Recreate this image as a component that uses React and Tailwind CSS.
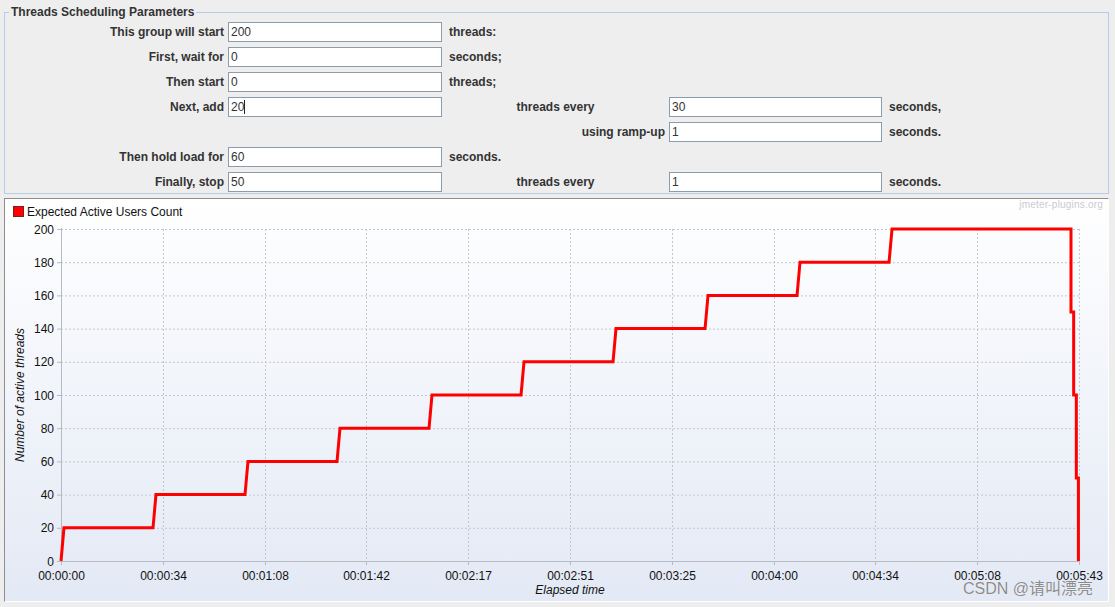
import React from "react";

const FONT = { fontFamily: '"Liberation Sans", Arial, sans-serif' };

const X0 = 61, X1 = 1079, Y0 = 562, Y1 = 230;
const tx = (t) => X0 + (t * (X1 - X0)) / 343;
const vy = (v) => Y0 - (v * (Y0 - Y1)) / 200;

const DATA = [
  [0, 0], [1, 20], [31, 20], [32, 40], [62, 40], [63, 60], [93, 60], [94, 80],
  [124, 80], [125, 100], [155, 100], [156, 120], [186, 120], [187, 140],
  [217, 140], [218, 160], [248, 160], [249, 180], [279, 180], [280, 200],
  [340.3, 200], [340.3, 150], [341.2, 150], [341.2, 100], [342.1, 100],
  [342.1, 50], [342.8, 50], [342.8, 0],
];

const XLABELS = ["00:00:00", "00:00:34", "00:01:08", "00:01:42", "00:02:17", "00:02:51", "00:03:25", "00:04:00", "00:04:34", "00:05:08", "00:05:43"];

function Field({ value, caret }) {
  return (
    <div className="h-[20px] bg-white border border-[#8d9cab] flex items-center pl-[2px] text-[12px] text-[#333333] leading-none">
      <span>{value}</span>
      {caret && <span className="inline-block w-[1px] h-[14px] bg-[#222]" />}
    </div>
  );
}

function Label({ children }) {
  return (
    <div className="h-[20px] flex items-center justify-end pr-[4px] text-[12px] font-bold text-[#333333] whitespace-nowrap">
      {children}
    </div>
  );
}

function Unit({ children, center }) {
  return (
    <div className={"h-[20px] flex items-center text-[12px] font-bold text-[#333333] whitespace-nowrap " + (center ? "justify-center" : "pl-[7px]")}>
      {children}
    </div>
  );
}

const E = () => <div className="h-[20px]" />;

function Chart() {
  const path = DATA.map(([t, v], i) => `${i ? "L" : "M"}${tx(t).toFixed(2)} ${vy(v).toFixed(2)}`).join(" ");
  const ys = [0, 20, 40, 60, 80, 100, 120, 140, 160, 180, 200];
  return (
    <svg width="1103" height="402" viewBox="5 200 1103 402" className="block" style={FONT}>
      {/* legend */}
      <rect x="13.5" y="207.5" width="10" height="10" fill="#ff0000" stroke="#7a2020" strokeWidth="1" />
      <text x="27" y="216.5" fontSize="12" fill="#111">Expected Active Users Count</text>
      <text x="1103" y="208.5" fontSize="10" fill="#c9ccd1" textAnchor="end" letterSpacing="0.2">jmeter-plugins.org</text>

      {/* grid */}
      {ys.slice(1).map((v) => (
        <line key={"h" + v} x1={X0} x2={X1} y1={vy(v) + 0.5} y2={vy(v) + 0.5} stroke="#c3c6cc" strokeDasharray="2 2" />
      ))}
      {XLABELS.slice(1).map((_, i) => {
        const x = Math.round(tx((343 * (i + 1)) / 10)) + 0.5;
        return <line key={"v" + i} x1={x} x2={x} y1={Y1} y2={Y0} stroke="#c3c6cc" strokeDasharray="2 2" />;
      })}

      {/* axes */}
      <line x1={X0 + 0.5} x2={X0 + 0.5} y1={Y1 - 1} y2={Y0 + 1} stroke="#b5bac3" />
      <line x1={X0} x2={X1 + 1} y1={Y0 + 0.5} y2={Y0 + 0.5} stroke="#b5bac3" />
      {ys.map((v) => (
        <g key={"y" + v}>
          <line x1={57} x2={X0} y1={vy(v) + 0.5} y2={vy(v) + 0.5} stroke="#b5bac3" />
          <text x="54" y={vy(v) + 4.5} fontSize="12" fill="#111" textAnchor="end">{v}</text>
        </g>
      ))}
      {XLABELS.map((l, i) => {
        const x = Math.round(tx((343 * i) / 10)) + 0.5;
        return (
          <g key={"x" + i}>
            <line x1={x} x2={x} y1={Y0} y2={Y0 + 4} stroke="#b5bac3" />
            <text x={x} y="580.5" fontSize="12" fill="#111" textAnchor="middle">{l}</text>
          </g>
        );
      })}

      <text x="570" y="595" fontSize="12" fill="#111" textAnchor="middle" fontStyle="italic">Elapsed time</text>
      <text x="24" y="396" fontSize="12" fill="#111" textAnchor="middle" fontStyle="italic" transform="rotate(-90 24 396)">Number of active threads</text>

      {/* data */}
      <path d={path} fill="none" stroke="#ff0000" strokeWidth="3" strokeLinejoin="miter" strokeLinecap="butt" />
    </svg>
  );
}

export default function App() {
  return (
    <div className="relative w-[1115px] h-[607px] pt-[1px] bg-[#eeeeee] overflow-hidden" style={FONT}>
      <fieldset className="ml-[4px] mt-[4px] w-[1105px] border border-[#b5cde4] p-0 pb-[1px] m-0">
        <legend className="ml-[4px] px-[2px] text-[12px] leading-[14px] font-bold text-[#333333]">
          Threads Scheduling Parameters
        </legend>
        <div className="mt-[3px] grid grid-cols-[223px_214px_227px_213px_1fr] gap-y-[5px]">
          <Label>This group will start</Label><Field value="200" /><Unit>threads:</Unit><E /><E />
          <Label>First, wait for</Label><Field value="0" /><Unit>seconds;</Unit><E /><E />
          <Label>Then start</Label><Field value="0" /><Unit>threads;</Unit><E /><E />
          <Label>Next, add</Label><Field value="20" caret /><Unit center>threads every</Unit><Field value="30" /><Unit>seconds,</Unit>
          <E /><E /><Label>using ramp-up</Label><Field value="1" /><Unit>seconds.</Unit>
          <Label>Then hold load for</Label><Field value="60" /><Unit>seconds.</Unit><E /><E />
          <Label>Finally, stop</Label><Field value="50" /><Unit center>threads every</Unit><Field value="1" /><Unit>seconds.</Unit>
        </div>
      </fieldset>

      <div className="ml-[4px] mt-[4px] w-[1105px] h-[404px] border-t border-l border-[#8e8e8e] border-r border-b border-r-[#ffffff] border-b-[#ffffff] bg-[linear-gradient(to_bottom,#ffffff,#e3e9f5)]">
        <Chart />
      </div>

      <div
        className="absolute left-[963px] top-[580px] text-[16px] leading-[18px] text-[#8c8c8c] whitespace-nowrap"
        style={{ fontFamily: '"Liberation Sans", "Noto Sans CJK SC", sans-serif', textShadow: "0 0 1px #ffffff" }}
      >
        CSDN @请叫漂亮
      </div>
    </div>
  );
}
